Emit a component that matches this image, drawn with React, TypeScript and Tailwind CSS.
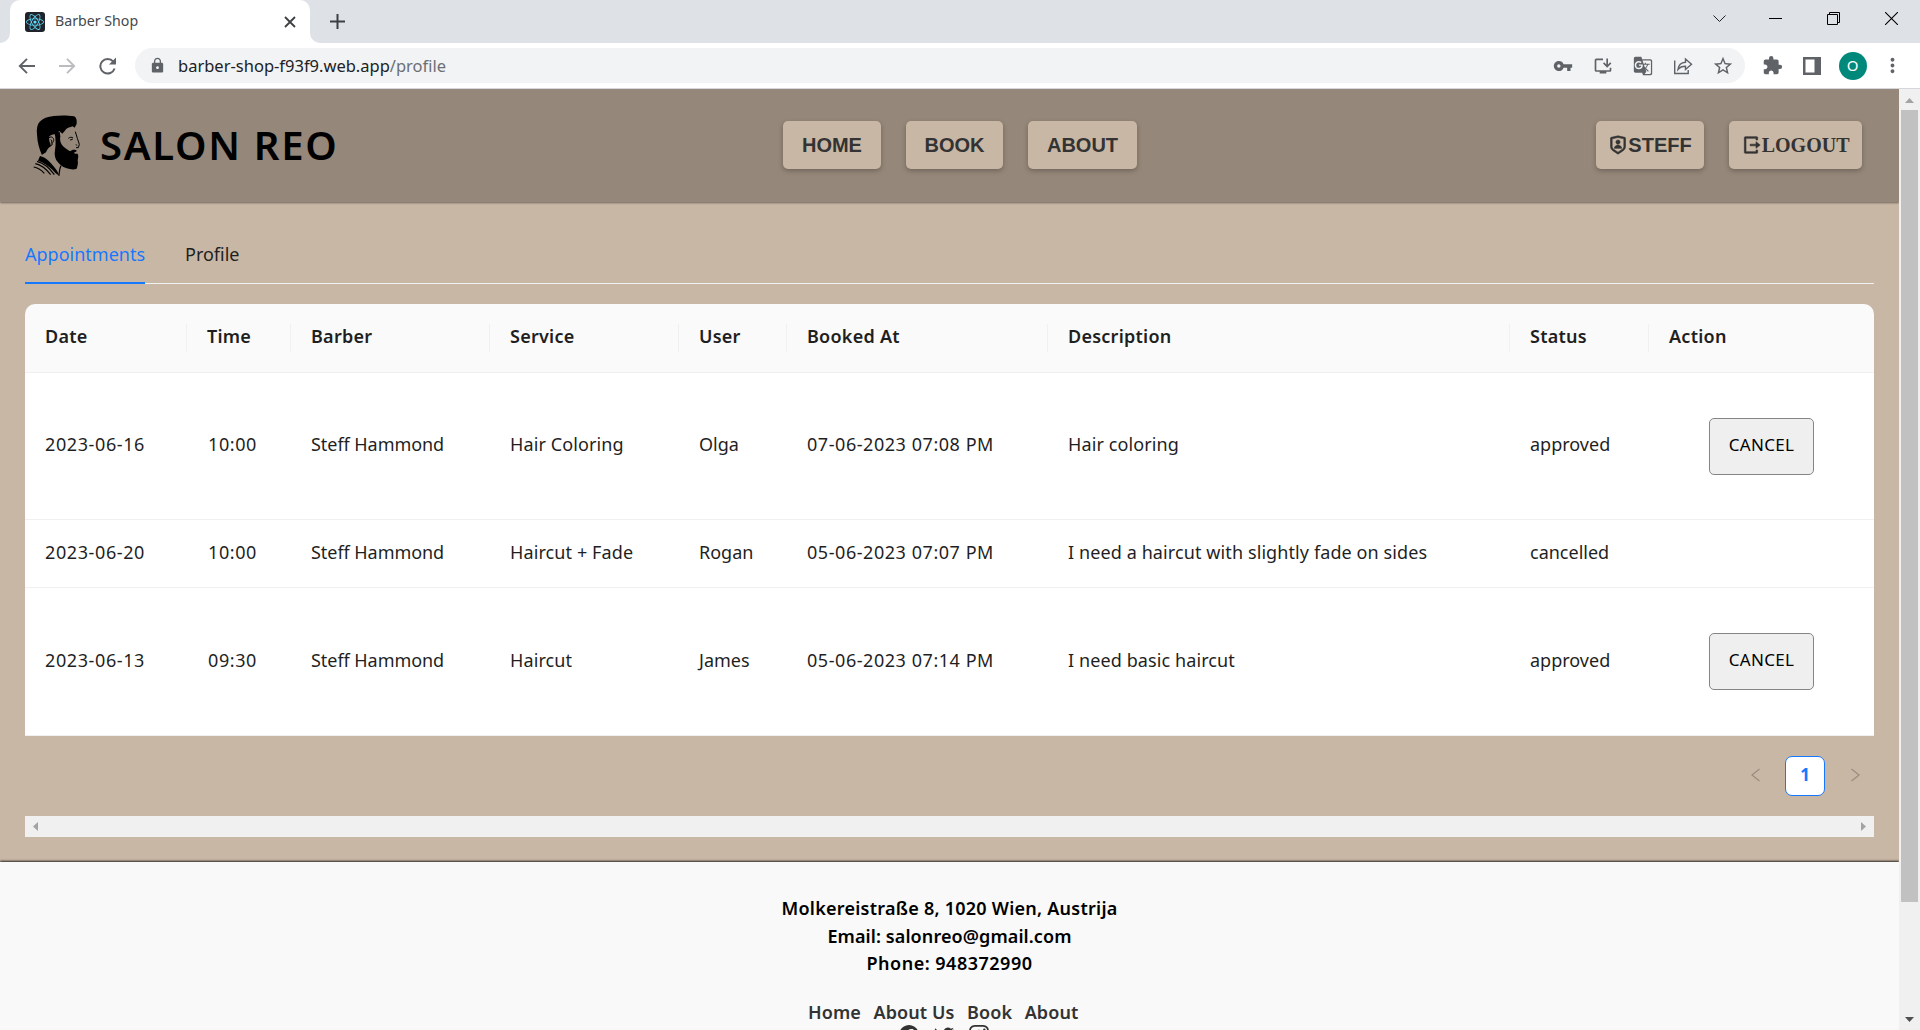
import type { ReactNode } from "react";
import { FaReact } from "react-icons/fa";
import { BsFacebook, BsInstagram, BsTwitter } from "react-icons/bs";
import { RiLogoutBoxRLine, RiShieldUserLine } from "react-icons/ri";
import {
  MdExtension,
  MdGTranslate,
  MdInstallDesktop,
  MdLock,
  MdMoreVert,
  MdStarBorder,
  MdVpnKey,
} from "react-icons/md";

function TabStrip() {
  return (
    <div className="flex h-[43px] shrink-0 bg-[#dee1e6]">
      <div className="flex w-[10px] items-end bg-white">
        <div className="h-full w-full rounded-br-[10px] bg-[#dee1e6]" />
      </div>
      <div className="flex w-[300px] bg-[#dee1e6]">
        <div className="flex w-full items-center rounded-t-[10px] bg-white pr-[14px] pl-[15px]">
          <div className="flex size-5 items-center justify-center rounded-[3px] bg-[#20232a] text-[#61dafb]">
            <FaReact size={18} />
          </div>
          <span className="ml-[10px] flex-1 pb-[2px] text-[14.2px] text-[#45494d]">Barber Shop</span>
          <svg width="12" height="12" viewBox="0 0 12 12" stroke="#3c4043" strokeWidth="1.8">
            <path d="M1 1l10 10M11 1L1 11" />
          </svg>
        </div>
      </div>
      <div className="w-[10px] bg-white">
        <div className="h-full w-full rounded-bl-[10px] bg-[#dee1e6]" />
      </div>
      <div className="flex flex-1 items-center pl-[10px]">
        <svg width="15" height="15" viewBox="0 0 15 15" stroke="#3c4043" strokeWidth="2">
          <path d="M7.5 0v15M0 7.5h15" />
        </svg>
      </div>
      <div className="flex h-[37px] items-center gap-[44px] pr-[22px]">
        <svg className="-mr-px" width="13" height="13" viewBox="0 0 13 13" fill="none" stroke="#222">
          <path d="M.5 3.5l6 6 6-6" />
        </svg>
        <svg className="mr-px" width="13" height="13" viewBox="0 0 13 13" stroke="#000">
          <path d="M0 6.5h13" />
        </svg>
        <svg className="mr-px" width="13" height="13" viewBox="0 0 13 13" fill="none" stroke="#000">
          <path d="M.5 2.5h10v10H.5zM2.5 2.500V.5h10v10h-2" />
        </svg>
        <svg width="13" height="13" viewBox="0 0 13 13" stroke="#000" strokeWidth="1.1">
          <path d="M0 0l13 13M13 0L0 13" />
        </svg>
      </div>
    </div>
  );
}

function ToolIcon({ children }: { children: ReactNode }) {
  return <div className="flex w-10 items-center justify-center">{children}</div>;
}

function Toolbar() {
  return (
    <div className="flex h-[46px] shrink-0 items-start border-b border-[#d5d7db] bg-white pt-[5px]">
      <div className="flex h-[35px] w-[135px] items-center pl-[7px]">
        <ToolIcon>
          <svg width="18" height="16" viewBox="0 0 18 16" fill="none" stroke="#5f6368" strokeWidth="1.9">
            <path d="M17 8H2M9 .8L1.800 8 9 15.200" />
          </svg>
        </ToolIcon>
        <ToolIcon>
          <svg width="18" height="16" viewBox="0 0 18 16" fill="none" stroke="#babcbe" strokeWidth="1.9">
            <path d="M1 8h15M9 .8L16.200 8 9 15.200" />
          </svg>
        </ToolIcon>
        <ToolIcon>
          <svg width="19" height="18" viewBox="0 0 19 18" fill="none" stroke="#5f6368" strokeWidth="2">
            <path d="M15.300 4.600A7.300 7.300 0 1 0 16.600 11.500" />
            <path d="M18 .5v7h-7z" fill="#5f6368" stroke="none" />
          </svg>
        </ToolIcon>
      </div>
      <div className="flex h-[35px] w-[1610px] items-center rounded-full bg-[#f1f3f4] pr-[2.500px] pl-[14px] text-[#5f6368]">
        <MdLock size={17} />
        <span className="ml-[12px] flex-1 pt-px text-[16.500px] text-[#202124]">
          barber-shop-f93f9.web.app<span className="text-[#6b6f74]">/profile</span>
        </span>
        <ToolIcon>
          <MdVpnKey size={20} />
        </ToolIcon>
        <ToolIcon>
          <MdInstallDesktop size={20} />
        </ToolIcon>
        <ToolIcon>
          <MdGTranslate size={20} />
        </ToolIcon>
        <ToolIcon>
          <svg width="20" height="18" viewBox="0 0 20 18" fill="none" stroke="#5f6368" strokeWidth="1.400">
            <path d="M1.700 3.500v13h13.500V13" />
            <path d="M5 12.500C5.500 8 8 5.600 12.500 5.300V2l6 5.200-6 5.300V9.300C9 9.300 7 10 5 12.500z" />
          </svg>
        </ToolIcon>
        <ToolIcon>
          <MdStarBorder size={22} />
        </ToolIcon>
      </div>
      <div className="flex h-[35px] flex-1 items-center pl-[7px] text-[#5f6368]">
        <ToolIcon>
          <MdExtension size={21} />
        </ToolIcon>
        <ToolIcon>
          <svg width="18" height="18" viewBox="0 0 18 18">
            <path fill="#5f6368" fillRule="evenodd" d="M0 0h18v18H0zM2.500 2.500v13h9v-13z" />
          </svg>
        </ToolIcon>
        <ToolIcon>
          <div className="ml-px flex size-7 items-center justify-center rounded-full bg-[#00897b] text-[15px] text-white">
            O
          </div>
        </ToolIcon>
        <ToolIcon>
          <MdMoreVert size={23} />
        </ToolIcon>
      </div>
    </div>
  );
}

function BarberLogo() {
  return (
    <svg className="mt-px h-[90px] w-[80px]" viewBox="0 0 240 270" fill="#000">
      <path d="M66 163C58 145 52 125 51 100c-2-28 4-40 26-50 24-8 62-8 85-4 8 4 9 14 8 22l-6 12c-2-1-4-2-6-4-8 3-16 4-20 9-3 5-7 9-11 13l-9-8c-4 3-4 8-7 13-7-6-18-2-24 5 0 10 3 20 6 28-7 3-11 10-15 18-4 3-10 5-12 9z" />
      <path d="M104 96l15-4 2 14c-2 10 0 19 5 26 6 8 14 12 24 19 7-7 17-6 21-1l-9 5c2 4 6 2 11 3l2 8-2 12c2 8 0 17-3 25-8 4-20 2-30-1-14-4-23-13-31-24-5-10-6-20-4-30 3-18 2-36-1-52z" />
      <path
        fill="none"
        stroke="#000"
        strokeWidth="3"
        d="M87 110c8-5 15 0 14 9-2 5-5 7-5 13-6 4-9-4-10-8M92 116c5 1 3 7 1 12M145 112c5-4 10-4 14-1M150 117l8-2M166 92l6 20 6 18-3 10h-7M168 130l3 4M161 64l5-3"
      />
      <path d="M60 165c18 4 30 18 40 30 9 10 14 18 18 30-8-6-14-10-20-18-12-12-26-22-44-28z" />
      <path
        fill="none"
        stroke="#000"
        strokeWidth="3.500"
        d="M51 181c22 6 38 20 52 40M46 188c20 4 34 18 46 33M41 198c16 2 24 10 32 19M123 194c-5 9-5 18-6 30"
      />
    </svg>
  );
}

function NavButton({ children, wide }: { children: ReactNode; wide?: boolean }) {
  return (
    <button
      className={
        (wide ? "px-[18.750px]" : "px-[12.500px]") +
        " flex h-12 items-center rounded-[5px] bg-[#c9b7a5] text-[20px] font-bold text-[#333] shadow-[0_2px_5px_rgba(0,0,0,0.25)]"
      }
    >
      {children}
    </button>
  );
}

function SiteHeader() {
  return (
    <header className="relative grid h-[113px] shrink-0 grid-cols-[1fr_auto_1fr] items-center bg-[#958779] pr-[37px] pb-px pl-5 font-['Liberation_Sans',sans-serif] shadow-[0_1px_2px_rgba(0,0,0,0.45)]">
      <div className="flex items-center">
        <BarberLogo />
        <span className="font-['Noto_Sans',sans-serif] text-[40px] leading-none font-semibold tracking-[1.700px] text-black">
          SALON REO
        </span>
      </div>
      <nav className="flex gap-[25px] pl-[38px]">
        <NavButton wide>HOME</NavButton>
        <NavButton wide>BOOK</NavButton>
        <NavButton wide>ABOUT</NavButton>
      </nav>
      <div className="flex justify-end gap-[25px]">
        <NavButton>
          <RiShieldUserLine size={20} stroke="currentColor" strokeWidth={0.7} />
          STEFF
        </NavButton>
        <NavButton>
          <RiLogoutBoxRLine className="-ml-px mr-px" size={20} stroke="currentColor" strokeWidth={0.7} />
          <span className="font-['Liberation_Serif',serif]">LOGOUT</span>
        </NavButton>
      </div>
    </header>
  );
}

const columns = ["Date", "Time", "Barber", "Service", "User", "Booked At", "Description", "Status", "Action"];

interface Appointment {
  date: string;
  time: string;
  service: string;
  user: string;
  booked: string;
  description: string;
  status: string;
}

const appointments: Appointment[] = [
  { date: "2023-06-16", time: "10:00", service: "Hair Coloring", user: "Olga", booked: "07-06-2023 07:08 PM", description: "Hair coloring", status: "approved" },
  { date: "2023-06-20", time: "10:00", service: "Haircut + Fade", user: "Rogan", booked: "05-06-2023 07:07 PM", description: "I need a haircut with slightly fade on sides", status: "cancelled" },
  { date: "2023-06-13", time: "09:30", service: "Haircut", user: "James", booked: "05-06-2023 07:14 PM", description: "I need basic haircut", status: "approved" },
];

const gridColumns = "grid grid-cols-[162px_104px_199px_189px_108px_261px_462px_139px_225px]";

function AppointmentRow({ item }: { item: Appointment }) {
  const cancellable = item.status === "approved";
  return (
    <div
      className={
        gridColumns +
        " items-center border-b border-[#f0f0f0] bg-white " +
        (cancellable ? "h-[147px] last:h-[148px]" : "h-[68px]")
      }
    >
      <span className="pb-[3px] pl-5 tracking-[0.600px]">{item.date}</span>
      <span className="pb-[3px] pl-[21px] tracking-[0.600px]">{item.time}</span>
      <span className="pb-[3px] pl-5 tracking-[-0.050px]">Steff Hammond</span>
      <span className="pb-[3px] pl-5 tracking-[0.100px]">{item.service}</span>
      <span className="pb-[3px] pl-5">{item.user}</span>
      <span className="pb-[3px] pl-5 tracking-[0.550px]">{item.booked}</span>
      <span className="pb-[3px] pl-5 tracking-[0.100px]">{item.description}</span>
      <span className="pb-[3px] pl-5">{item.status}</span>
      {cancellable && (
        <div className="pl-[60px]">
          <button className="h-[57px] w-[105px] rounded-[5px] border border-[#858585] bg-[#efefef] pb-[3px] text-[17px] tracking-[0.300px] text-black">
            CANCEL
          </button>
        </div>
      )}
    </div>
  );
}

function Main() {
  return (
    <main className="flex h-[659px] shrink-0 flex-col bg-[#c9b7a5] px-[25px] text-[18px] text-[#1f1f1f]">
      <div className="mt-[26px] flex h-[56px] shrink-0 border-b border-[#f0f0f0]">
        <div className="-mb-px flex w-[120px] items-center border-b-2 border-[#1677ff] pb-px whitespace-nowrap text-[#1677ff]">
          Appointments
        </div>
        <div className="ml-10 flex items-center pb-[2px]">Profile</div>
      </div>
      <div className="mt-5 shrink-0 overflow-hidden rounded-t-[10px]">
        <div className={gridColumns + " h-[69px] items-center border-b border-[#f0f0f0] bg-[#fafafa] font-semibold"}>
          {columns.map((name, i) => (
            <div
              key={name}
              className={
                "flex h-7 items-center pb-[3px] pl-5 tracking-[0.250px] " +
                (i < columns.length - 1 ? "border-r border-[#f0f0f0]" : "")
              }
            >
              {name}
            </div>
          ))}
        </div>
        {appointments.map((item) => (
          <AppointmentRow key={item.date} item={item} />
        ))}
      </div>
      <div className="mt-5 flex h-10 shrink-0 items-center justify-end gap-[26px] pr-[14px] text-[#9b8d80]">
        <svg className="-mt-[3px]" width="9" height="14" viewBox="0 0 9 14" fill="none" stroke="currentColor" strokeWidth="1.300">
          <path d="M8.500 1L1 7l7.500 6" />
        </svg>
        <span className="-ml-px flex size-10 items-center justify-center rounded-[7px] border border-[#1677ff] bg-white pb-[3px] text-[17px] font-bold text-[#1677ff]">
          1
        </span>
        <svg className="-mt-[3px]" width="9" height="14" viewBox="0 0 9 14" fill="none" stroke="currentColor" strokeWidth="1.300">
          <path d="M.5 1L8 7 .5 13" />
        </svg>
      </div>
      <div className="mt-5 flex h-[21px] shrink-0 items-center justify-between bg-[#f0f0f0] px-2">
        <svg width="5" height="9" fill="#a3a3a3">
          <path d="M5 0v9L0 4.500z" />
        </svg>
        <svg width="5" height="9" fill="#a3a3a3">
          <path d="M0 0v9l5-4.500z" />
        </svg>
      </div>
    </main>
  );
}

function Footer() {
  return (
    <footer className="mt-px flex min-h-0 flex-1 flex-col items-center bg-[#f9f9f9] pt-[33px] text-[18px] leading-[27.500px] font-semibold text-black shadow-[0_-1px_2px_rgba(0,0,0,0.8)]">
      <p className="tracking-[0.250px]">Molkereistraße 8, 1020 Wien, Austrija</p>
      <p className="tracking-[0.100px]">Email: salonreo@gmail.com</p>
      <p className="tracking-[0.500px]">Phone: 948372990</p>
      <div className="mt-[21px] flex gap-[12.500px] pr-[12.500px] tracking-[0.100px] text-[#333]">
        <span>Home</span>
        <span>About Us</span>
        <span>Book</span>
        <span>About</span>
      </div>
      <div className="-mt-px flex gap-[15px] pr-[12px] text-[#333]">
        <BsFacebook className="shrink-0" size={20} />
        <BsTwitter className="shrink-0" size={20} />
        <BsInstagram className="shrink-0" size={20} />
      </div>
    </footer>
  );
}

function PageScrollbar() {
  return (
    <div className="flex w-[21px] flex-col items-center bg-[#f0f0f0] pt-[9px] pb-2">
      <svg width="9" height="5" fill="#a3a3a3">
        <path d="M0 5h9L4.500 0z" />
      </svg>
      <div className="mt-[7px] h-[792px] w-[17px] bg-[#c1c1c1]" />
      <svg className="mt-auto" width="9" height="5" fill="#505050">
        <path d="M0 0h9L4.500 5z" />
      </svg>
    </div>
  );
}

export default function App() {
  return (
    <div className="flex h-[1030px] w-[1920px] flex-col overflow-hidden font-['Noto_Sans',sans-serif]">
      <TabStrip />
      <Toolbar />
      <div className="flex min-h-0 flex-1">
        <div className="flex w-[1899px] flex-col overflow-hidden bg-[#c9b7a5]">
          <SiteHeader />
          <Main />
          <Footer />
        </div>
        <PageScrollbar />
      </div>
    </div>
  );
}
